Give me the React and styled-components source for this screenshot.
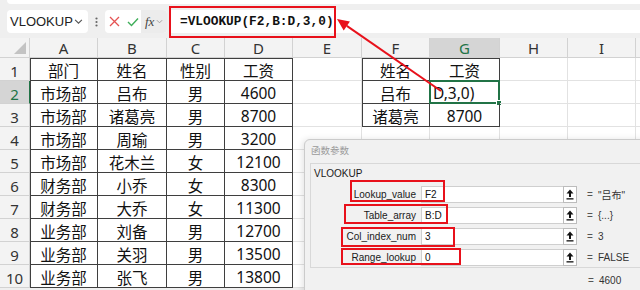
import React from 'react'
import styled, { createGlobalStyle } from 'styled-components'

const GREEN = '#217346'
const RED = '#e8111b'

const GlobalStyle = createGlobalStyle`
  html, body {
    margin: 0;
    padding: 0;
    background: #fff;
  }
  body {
    font-family: "Noto Sans", "Noto Sans CJK SC", sans-serif;
  }
`

const colWidths = [30, 68, 69, 58, 68, 69, 68, 70, 68, 68, 30]
const letters = ['A', 'B', 'C', 'D', 'E', 'F', 'G', 'H', 'I', '']

const table = [
    ['部门', '姓名', '性别', '工资'],
    ['市场部', '吕布', '男', '4600'],
    ['市场部', '诸葛亮', '男', '8700'],
    ['市场部', '周瑜', '男', '3200'],
    ['市场部', '花木兰', '女', '12100'],
    ['财务部', '小乔', '女', '8300'],
    ['财务部', '大乔', '女', '11300'],
    ['业务部', '刘备', '男', '12700'],
    ['业务部', '关羽', '男', '13500'],
    ['业务部', '张飞', '男', '13800'],
]

const lookup = [
    ['姓名', '工资'],
    ['吕布', 'D,3,0)'],
    ['诸葛亮', '8700'],
]

const params = [
    { name: 'Lookup_value', input: 'F2', result: '"吕布"' },
    { name: 'Table_array', input: 'B:D', result: '{...}' },
    { name: 'Col_index_num', input: '3', result: '3' },
    { name: 'Range_lookup', input: '0', result: 'FALSE' },
]

// red marks drawn over the dialog, relative to its padding box
const marks = [
    { left: 45, top: 40, width: 95, height: 22 },
    { left: 39, top: 64, width: 104, height: 20 },
    { left: 36, top: 87, width: 114, height: 20 },
    { left: 36, top: 108, width: 120, height: 17 },
]

function cellFor(row, col) {
    if (col <= 3) {
        return { text: table[row][col], outlined: true, top: row === 0, left: col === 0 }
    }
    if ((col === 5 || col === 6) && row <= 2) {
        return {
            text: lookup[row][col - 5],
            outlined: true,
            top: row === 0,
            left: col === 5,
            selected: row === 1 && col === 6,
        }
    }
    return { text: '' }
}

function Chevron({ size = 8, color = '#666' }) {
    return (
        <svg width={size} height={size} viewBox="0 0 8 8">
            <polyline points="1,2.5 4,5.5 7,2.5" fill="none" stroke={color} strokeWidth="1" />
        </svg>
    )
}

function UploadIcon() {
    return (
        <svg width="8" height="11" viewBox="0 0 8 11">
            <path d="M4 0.5 L7.5 4.5 H5 V8 H3 V4.5 H0.5 Z" fill="#111" />
            <rect x="0.5" y="9.2" width="7" height="1.3" fill="#111" />
        </svg>
    )
}

export default function App() {
    return (
        <Page>
            <GlobalStyle />
            <TopStrip />

            <FormulaBar>
                <NameBox>
                    VLOOKUP
                    <Chevron size={9} color="#555" />
                </NameBox>
                <Dots>
                    <svg width="3" height="10" viewBox="0 0 3 10">
                        <circle cx="1.5" cy="1.5" r="1.1" fill="#666" />
                        <circle cx="1.5" cy="5" r="1.1" fill="#666" />
                        <circle cx="1.5" cy="8.5" r="1.1" fill="#666" />
                    </svg>
                </Dots>
                <FuncBox>
                    <IconSlot>
                        <svg width="11" height="11" viewBox="0 0 11 11">
                            <path d="M1 1 L10 10 M10 1 L1 10" stroke="#e55353" strokeWidth="1.3" />
                        </svg>
                    </IconSlot>
                    <IconSlot>
                        <svg width="12" height="10" viewBox="0 0 12 10">
                            <polyline points="1,5 4.5,8.5 11,1.5" fill="none" stroke="#3fae5a" strokeWidth="1.4" />
                        </svg>
                    </IconSlot>
                    <FxArea>
                        <Fx>fx</Fx>
                        <Chevron size={7} color="#999" />
                    </FxArea>
                </FuncBox>
                <FormulaInput>=VLOOKUP(F2,B:D,3,0)</FormulaInput>
            </FormulaBar>

            <Sheet>
                <HeaderCell $corner />
                {letters.map((l, i) => (
                    <HeaderCell key={i} $active={l === 'G'}>{l}</HeaderCell>
                ))}
                {table.map((_, r) => (
                    <React.Fragment key={r}>
                        <RowHead $active={r === 1}>{r + 1}</RowHead>
                        {letters.map((l, c) => {
                            const cell = cellFor(r, c)
                            return (
                                <Cell
                                    key={c}
                                    $outlined={cell.outlined}
                                    $top={cell.top}
                                    $left={cell.left}
                                    $align={cell.selected ? 'left' : 'center'}
                                >
                                    {cell.text}
                                    {cell.selected && (
                                        <Selection>
                                            <Handle />
                                        </Selection>
                                    )}
                                </Cell>
                            )
                        })}
                    </React.Fragment>
                ))}
            </Sheet>

            <Dialog>
                <DialogTitle>函数参数</DialogTitle>
                <GroupBox>
                    <GroupLabel>VLOOKUP</GroupLabel>
                    <ParamList>
                        {params.map(p => (
                            <ParamRow key={p.name}>
                                <ParamLabel>{p.name}</ParamLabel>
                                <ParamInput>{p.input}</ParamInput>
                                <UploadButton><UploadIcon /></UploadButton>
                                <Eq>=</Eq>
                                <ParamValue>{p.result}</ParamValue>
                            </ParamRow>
                        ))}
                    </ParamList>
                </GroupBox>
                <ResultRow>
                    <Eq>=</Eq>
                    <ParamValue>4600</ParamValue>
                </ResultRow>
                {marks.map((m, i) => (
                    <Mark key={i} style={{ left: m.left, top: m.top, width: m.width, height: m.height }} />
                ))}
            </Dialog>

            <FormulaMark />

            <Arrow width="640" height="290" viewBox="0 0 640 290">
                <line x1="441" y1="91" x2="346.8" y2="25.9" stroke={RED} strokeWidth="2" />
                <polygon points="337,19 349.9,21.6 343.7,30.4" fill={RED} />
            </Arrow>
        </Page>
    )
}

const Page = styled.div`
    position: relative;
    width: 640px;
    height: 290px;
    overflow: hidden;
    background: #efefef;
`

const TopStrip = styled.div`
    height: 4px;
    margin-left: 7px;
    background: #fff;
    border-bottom-left-radius: 4px;
`

const FormulaBar = styled.div`
    display: flex;
    height: 23px;
    margin: 6px 0 5px 7px;
`

const NameBox = styled.div`
    box-sizing: border-box;
    width: 81px;
    display: flex;
    align-items: center;
    justify-content: space-between;
    padding: 0 5px 0 3px;
    background: #fff;
    border-radius: 4px;
    font-family: "Liberation Sans", sans-serif;
    font-size: 13px;
    color: #222;
`

const Dots = styled.div`
    width: 17px;
    display: flex;
    align-items: center;
    justify-content: center;
`

const FuncBox = styled.div`
    width: 62px;
    display: flex;
    align-items: center;
    background: #fff;
    border-radius: 4px;
    overflow: hidden;
`

const IconSlot = styled.div`
    width: 17px;
    display: flex;
    justify-content: center;
    margin-left: 1px;
`

const FxArea = styled.div`
    margin-left: auto;
    width: 26px;
    height: 100%;
    display: flex;
    align-items: center;
    gap: 2px;
    padding-left: 4px;
    box-sizing: border-box;
    background: #ececec;
`

const Fx = styled.span`
    font-family: "Liberation Serif", serif;
    font-style: italic;
    font-size: 13px;
    color: #444;
`

const FormulaInput = styled.div`
    flex: 1;
    margin-left: 3px;
    display: flex;
    align-items: center;
    padding-left: 10px;
    background: #fff;
    font-family: "Liberation Mono", monospace;
    font-weight: bold;
    font-size: 12.8px;
    color: #111;
`

const FormulaMark = styled.div`
    position: absolute;
    left: 169px;
    top: 6px;
    width: 167px;
    height: 32px;
    box-sizing: border-box;
    border: 2px solid ${RED};
`

const Sheet = styled.div`
    display: grid;
    grid-template-columns: ${colWidths.map(w => w + 'px').join(' ')};
    grid-template-rows: 20px repeat(10, 23px);
    background: #fff;
`

const HeaderCell = styled.div`
    position: relative;
    box-sizing: border-box;
    display: flex;
    align-items: center;
    justify-content: center;
    background: ${p => (p.$active ? '#d5d5d5' : '#f3f3f3')};
    border-right: 1px solid #d2d2d2;
    border-bottom: 1px solid #d2d2d2;
    font-family: "Noto Sans", sans-serif;
    font-size: 15px;
    color: ${p => (p.$active ? GREEN : '#333')};

    &::after {
        content: '';
        display: ${p => (p.$corner ? 'block' : 'none')};
        position: absolute;
        right: 3px;
        bottom: 3px;
        width: 12px;
        height: 12px;
        background: #c3c3c3;
        clip-path: polygon(100% 0, 100% 100%, 0 100%);
    }
`

const RowHead = styled(HeaderCell)`
    padding-top: 4px;
    border-right: 1px solid ${p => (p.$active ? GREEN : '#d2d2d2')};
`

const shadowFor = p => {
    const s = []
    if (p.$top) s.push('inset 0 1px 0 #3f3f3f')
    if (p.$left) s.push('inset 1px 0 0 #3f3f3f')
    return s.length ? s.join(', ') : 'none'
}

const Cell = styled.div`
    position: relative;
    box-sizing: border-box;
    display: flex;
    align-items: center;
    justify-content: ${p => (p.$align === 'left' ? 'flex-start' : 'center')};
    padding: 2px 2px 0 ${p => (p.$align === 'left' ? '3px' : '2px')};
    border-right: 1px solid ${p => (p.$outlined ? '#3f3f3f' : '#e2e2e2')};
    border-bottom: 1px solid ${p => (p.$outlined ? '#3f3f3f' : '#e2e2e2')};
    box-shadow: ${shadowFor};
    font-size: 15.5px;
    color: #111;
    white-space: nowrap;
`

const Selection = styled.div`
    position: absolute;
    left: -1px;
    top: -1px;
    right: -1px;
    bottom: -1px;
    border: 2px solid ${GREEN};
`

const Handle = styled.div`
    position: absolute;
    right: -4px;
    bottom: -4px;
    width: 4px;
    height: 4px;
    background: ${GREEN};
    border: 1px solid #fff;
`

const Dialog = styled.div`
    position: absolute;
    left: 304px;
    top: 139px;
    right: -10px;
    bottom: -10px;
    background: #f1f1f1;
    border: 1px solid #cbcbcb;
    border-top-left-radius: 6px;
    box-shadow: -2px 0 6px rgba(0, 0, 0, 0.1);
    font-family: "Liberation Sans", "Noto Sans CJK SC", sans-serif;
`

const DialogTitle = styled.div`
    padding: 4px 0 0 6px;
    height: 12px;
    line-height: 12px;
    font-family: "Noto Sans CJK SC", sans-serif;
    font-size: 9.5px;
    color: #9a9a9a;
`

const GroupBox = styled.div`
    margin: 7px 0 0 5px;
    padding: 3px 0 1px;
    border: 1px solid #d8d8d8;
    border-right: none;
`

const GroupLabel = styled.div`
    padding-left: 3px;
    height: 13px;
    line-height: 13px;
    font-size: 10px;
    color: #1a1a1a;
`

const ParamList = styled.div`
    margin-top: 6px;
    display: flex;
    flex-direction: column;
    gap: 4px;
`

const ParamRow = styled.div`
    display: flex;
    align-items: center;
    height: 17px;
`

const ParamLabel = styled.div`
    width: 105px;
    margin-right: 5px;
    text-align: right;
    font-size: 10px;
    color: #1a1a1a;
`

const ParamInput = styled.div`
    box-sizing: border-box;
    width: 142px;
    height: 17px;
    padding: 1px 0 0 3px;
    background: #fff;
    border: 1px solid #cfcfcf;
    border-right: none;
    font-size: 10px;
    line-height: 14px;
    color: #111;
`

const UploadButton = styled.div`
    box-sizing: border-box;
    width: 14px;
    height: 17px;
    display: flex;
    align-items: center;
    justify-content: center;
    background: #fff;
    border: 1px solid #bcbcbc;
`

const Eq = styled.span`
    margin-left: 10px;
    width: 6px;
    font-size: 10px;
    color: #555;
`

const ParamValue = styled.span`
    margin-left: 5px;
    font-size: 10px;
    color: #333;
    white-space: nowrap;
`

const ResultRow = styled.div`
    display: flex;
    align-items: center;
    height: 12px;
    margin-top: 6px;
    padding-left: 273px;
`

const Mark = styled.div`
    position: absolute;
    box-sizing: border-box;
    border: 2px solid ${RED};
`

const Arrow = styled.svg`
    position: absolute;
    left: 0;
    top: 0;
    pointer-events: none;
`
